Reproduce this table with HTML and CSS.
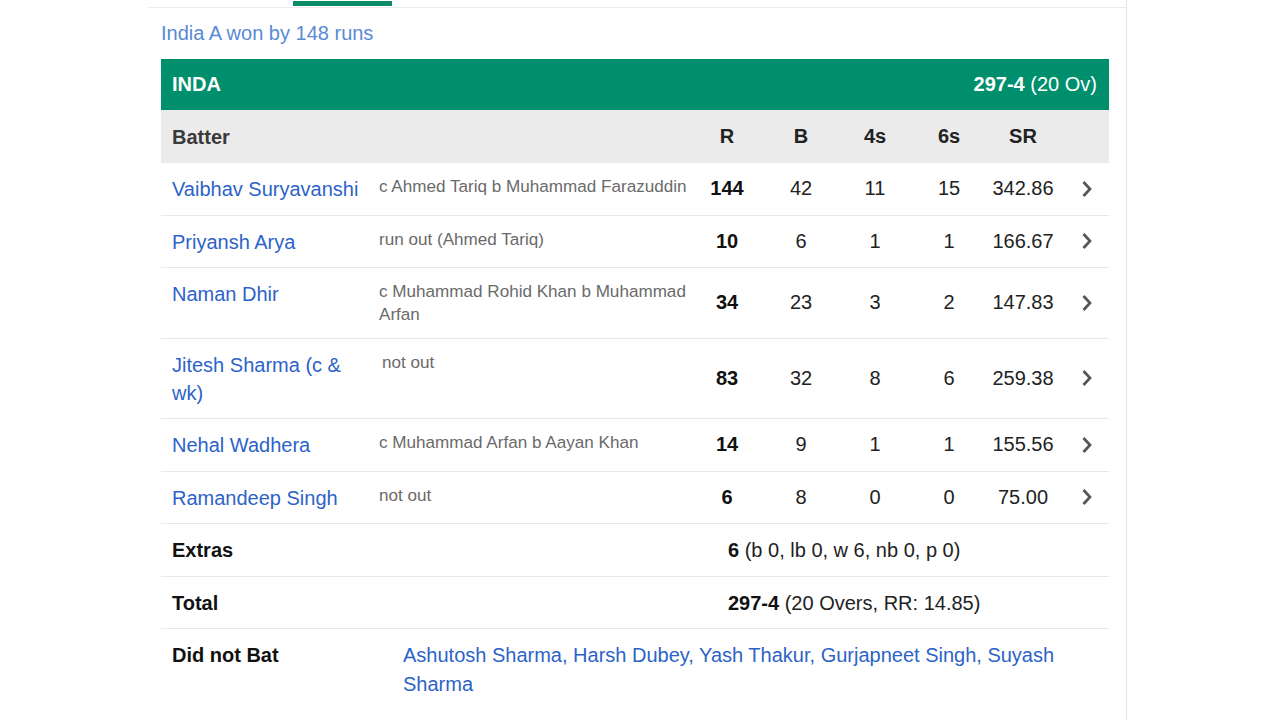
FILE: index.html
```html
<!DOCTYPE html>
<html lang="en">
<head>
<meta charset="utf-8">
<title>Scorecard</title>
<link rel="stylesheet" href="styles.css">
</head>
<body>
<div class="page">
  <div class="tabs"><span class="tab-indicator"></span></div>
  <div class="content">
    <div class="result">India A won by 148 runs</div>
    <div class="card">
      <div class="team-bar">
        <span class="team">INDA</span>
        <span class="score"><b>297-4</b> (20 Ov)</span>
      </div>
      <div class="row head">
        <div class="c-name">Batter</div>
        <div class="c-dis"></div>
        <div class="num">R</div>
        <div class="num">B</div>
        <div class="num">4s</div>
        <div class="num">6s</div>
        <div class="num">SR</div>
        <div class="chev"></div>
      </div>

      <div class="row">
        <div class="c-name"><a>Vaibhav Suryavanshi</a></div>
        <div class="c-dis">c Ahmed Tariq b Muhammad Farazuddin</div>
        <div class="num runs">144</div>
        <div class="num">42</div>
        <div class="num">11</div>
        <div class="num">15</div>
        <div class="num">342.86</div>
        <div class="chev"><svg width="12" height="18" viewBox="0 0 12 18"><path d="M2.5 2 L9 9 L2.5 16" fill="none" stroke="#555" stroke-width="2.7"/></svg></div>
      </div>

      <div class="row">
        <div class="c-name"><a>Priyansh Arya</a></div>
        <div class="c-dis">run out (Ahmed Tariq)</div>
        <div class="num runs">10</div>
        <div class="num">6</div>
        <div class="num">1</div>
        <div class="num">1</div>
        <div class="num">166.67</div>
        <div class="chev"><svg width="12" height="18" viewBox="0 0 12 18"><path d="M2.5 2 L9 9 L2.5 16" fill="none" stroke="#555" stroke-width="2.7"/></svg></div>
      </div>

      <div class="row">
        <div class="c-name"><a>Naman Dhir</a></div>
        <div class="c-dis">c Muhammad Rohid Khan b Muhammad Arfan</div>
        <div class="num runs">34</div>
        <div class="num">23</div>
        <div class="num">3</div>
        <div class="num">2</div>
        <div class="num">147.83</div>
        <div class="chev"><svg width="12" height="18" viewBox="0 0 12 18"><path d="M2.5 2 L9 9 L2.5 16" fill="none" stroke="#555" stroke-width="2.7"/></svg></div>
      </div>

      <div class="row">
        <div class="c-name"><a>Jitesh Sharma (c &amp; wk)</a></div>
        <div class="c-dis indent">not out</div>
        <div class="num runs">83</div>
        <div class="num">32</div>
        <div class="num">8</div>
        <div class="num">6</div>
        <div class="num">259.38</div>
        <div class="chev"><svg width="12" height="18" viewBox="0 0 12 18"><path d="M2.5 2 L9 9 L2.5 16" fill="none" stroke="#555" stroke-width="2.7"/></svg></div>
      </div>

      <div class="row">
        <div class="c-name"><a>Nehal Wadhera</a></div>
        <div class="c-dis">c Muhammad Arfan b Aayan Khan</div>
        <div class="num runs">14</div>
        <div class="num">9</div>
        <div class="num">1</div>
        <div class="num">1</div>
        <div class="num">155.56</div>
        <div class="chev"><svg width="12" height="18" viewBox="0 0 12 18"><path d="M2.5 2 L9 9 L2.5 16" fill="none" stroke="#555" stroke-width="2.7"/></svg></div>
      </div>

      <div class="row">
        <div class="c-name"><a>Ramandeep Singh</a></div>
        <div class="c-dis">not out</div>
        <div class="num runs">6</div>
        <div class="num">8</div>
        <div class="num">0</div>
        <div class="num">0</div>
        <div class="num">75.00</div>
        <div class="chev"><svg width="12" height="18" viewBox="0 0 12 18"><path d="M2.5 2 L9 9 L2.5 16" fill="none" stroke="#555" stroke-width="2.7"/></svg></div>
      </div>

      <div class="sum-row">
        <div class="label">Extras</div>
        <div class="value"><b>6</b> (b 0, lb 0, w 6, nb 0, p 0)</div>
      </div>
      <div class="sum-row">
        <div class="label">Total</div>
        <div class="value"><b>297-4</b> (20 Overs, RR: 14.85)</div>
      </div>
      <div class="dnb-row">
        <div class="label">Did not Bat</div>
        <div class="dnb">Ashutosh Sharma, Harsh Dubey, Yash Thakur, Gurjapneet Singh, Suyash Sharma</div>
      </div>
    </div>
  </div>
</div>
</body>
</html>
```
FILE: styles.css
```css
* { box-sizing: border-box; }
html, body { margin: 0; padding: 0; background: #fff; }
body {
  font-family: "Liberation Sans", Arial, sans-serif;
  color: #222;
  width: 1280px;
  height: 720px;
  overflow: hidden;
}
.page {
  margin-left: 148px;
  width: 979px;
  height: 720px;
  border-right: 1px solid #e4e4e4;
}
.tabs {
  height: 8px;
  padding-left: 145px;
  padding-top: 1px;
  border-bottom: 1px solid #ececec;
}
.tab-indicator {
  display: block;
  width: 99px;
  height: 5px;
  background: #0b8a68;
}
.content {
  padding-left: 13px;
}
.result {
  font-size: 20px;
  line-height: 24px;
  color: #5a8ad6;
  padding-top: 13px;
  margin-bottom: 14px;
}
.card {
  width: 948px;
}
.team-bar {
  height: 51px;
  background: #008f6c;
  color: #fff;
  display: flex;
  align-items: center;
  justify-content: space-between;
  padding: 0 12px 0 11px;
  font-size: 20px;
}
.team { font-weight: bold; }
.score b { font-weight: bold; }

.row {
  display: grid;
  grid-template-columns: 211px 318px 74px 74px 74px 74px 74px 49px;
  border-bottom: 1px solid #e8e8e8;
}
.row.head {
  background: #ebebeb;
  height: 53px;
  align-items: center;
  border-bottom: none;
  font-weight: bold;
  color: #3a3a3a;
  font-size: 20px;
}
.row.head .c-name, .row.head .num { padding-top: 0; padding-bottom: 0; }
.c-name {
  padding: 12px 8px 11.5px 11px;
  font-size: 20px;
  line-height: 28px;
}
.c-name a { color: #2d63c8; }
.c-dis {
  padding: 12px 0 11.5px 7px;
  font-size: 17.1px;
  line-height: 23px;
  color: #6a6a6a;
}
.c-dis.indent { padding-left: 10px; }
.num {
  font-size: 20px;
  text-align: center;
  align-self: center;
  color: #222;
}
.num.runs { font-weight: bold; color: #111; }
.chev {
  align-self: center;
  padding-left: 21px;
  display: flex;
}
.sum-row {
  display: grid;
  grid-template-columns: 566px 1fr;
  border-bottom: 1px solid #e8e8e8;
  font-size: 20px;
  line-height: 28px;
}
.sum-row .label, .dnb-row .label {
  padding: 12px 0 11.5px 11px;
  font-weight: bold;
  color: #111;
}
.sum-row .value {
  padding: 12px 0 11.5px 1px;
  color: #222;
}
.sum-row .value b { color: #111; }
.dnb-row {
  display: grid;
  grid-template-columns: 242px 1fr;
  font-size: 20px;
}
.dnb-row .label { line-height: 28px; padding-top: 12px; }
.dnb {
  padding: 12px 40px 12px 0;
  line-height: 29px;
  color: #2d63c8;
}
```
